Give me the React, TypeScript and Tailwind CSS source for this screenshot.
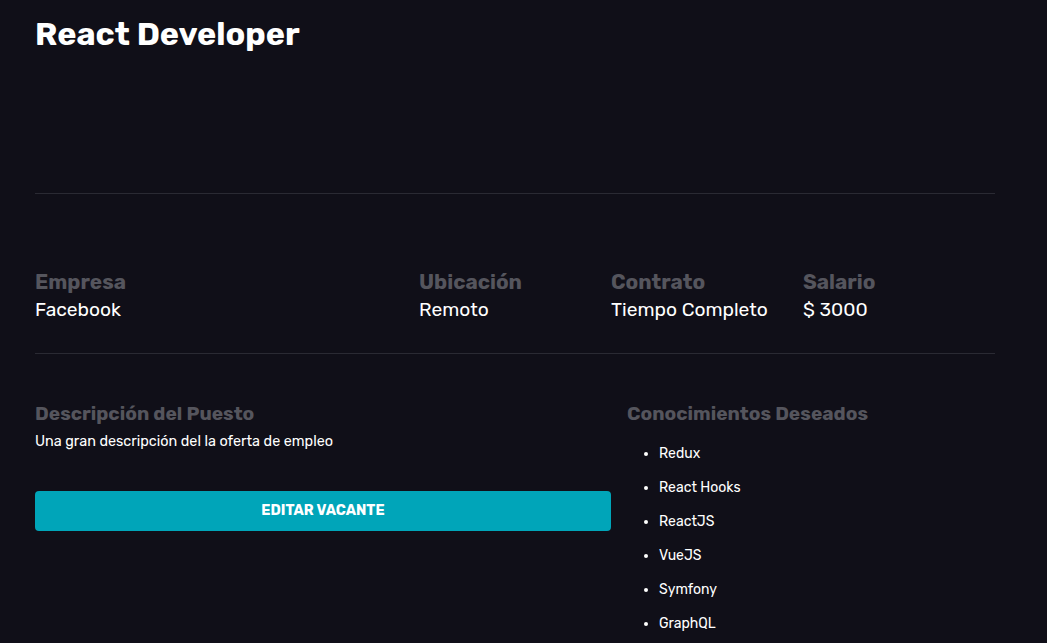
import React from "react";

const skills = ["Redux", "React Hooks", "ReactJS", "VueJS", "Symfony", "GraphQL"];

export default function App() {
  return (
    <div
      className="min-h-[643px] w-full bg-[#100f18] text-white"
      style={{ fontFamily: "Rubik, Inter, 'Noto Sans', sans-serif" }}
    >
      <div className="w-[960px] ml-[35px]">
        <div className="h-[194px] border-b border-[#2a2a33] pt-[14px]">
          <h1 className="text-[32.4px] leading-[40px] font-bold">React Developer</h1>
        </div>

        <div className="grid grid-cols-5 pt-[74px] pb-[29px] border-b border-[#2a2a33]">
          <div className="col-span-2">
            <p className="text-[20.8px] leading-[28px] font-bold text-[#55555d]">Empresa</p>
            <p className="text-[19.2px] leading-[28px]">Facebook</p>
          </div>
          <div>
            <p className="text-[20.8px] leading-[28px] font-bold text-[#55555d]">Ubicación</p>
            <p className="text-[19.2px] leading-[28px]">Remoto</p>
          </div>
          <div>
            <p className="text-[20.8px] leading-[28px] font-bold text-[#55555d]">Contrato</p>
            <p className="text-[19.2px] leading-[28px]">Tiempo Completo</p>
          </div>
          <div>
            <p className="text-[20.8px] leading-[28px] font-bold text-[#55555d]">Salario</p>
            <p className="text-[19.2px] leading-[28px]">$ 3000</p>
          </div>
        </div>

        <div className="grid grid-cols-5 pt-[46px]">
          <div className="col-span-3">
            <h2 className="text-[19.2px] leading-[28px] font-bold text-[#55555d]">Descripción del Puesto</h2>
            <p className="text-[14.4px] leading-[20px] mt-[4px]">Una gran descripción del la oferta de empleo</p>
            <button className="mt-[39px] w-full h-[40px] rounded-[4px] bg-[#00a5b9] text-[14.4px] font-bold uppercase">
              Editar Vacante
            </button>
          </div>
          <div className="col-span-2 pl-[16px]">
            <h2 className="text-[19.2px] leading-[28px] font-bold text-[#55555d]">Conocimientos Deseados</h2>
            <ul className="list-disc pl-[32px] mt-[16px] flex flex-col gap-[14px]">
              {skills.map((s) => (
                <li key={s} className="text-[14px] leading-[20px]">
                  {s}
                </li>
              ))}
            </ul>
          </div>
        </div>
      </div>
    </div>
  );
}
